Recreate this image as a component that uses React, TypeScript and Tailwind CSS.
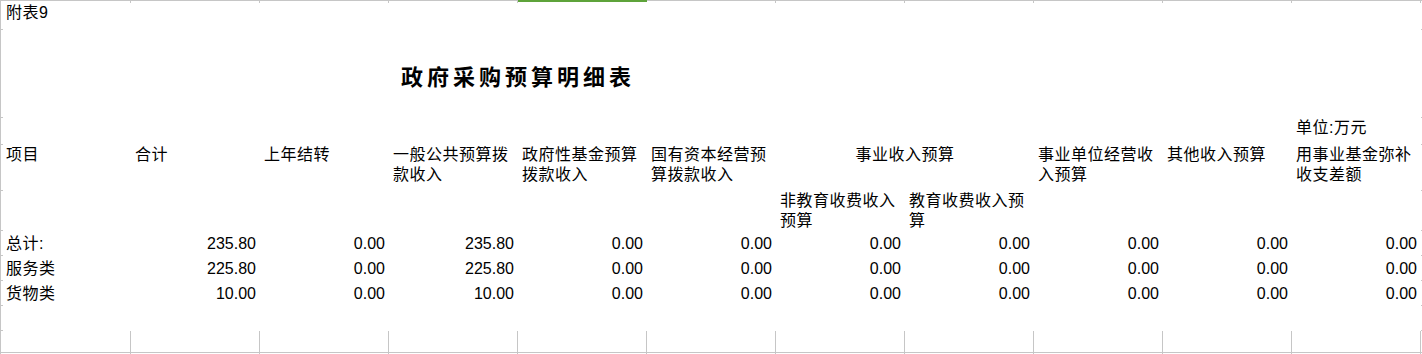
const grid = 'border-[#c6c6c6]';

const dataRows = [
  { name: '总计:', total: '235.80', general: '235.80' },
  { name: '服务类', total: '225.80', general: '225.80' },
  { name: '货物类', total: '10.00', general: '10.00' },
];

// edge cells: left border line with row ticks, right ticks
function LeftEdge({ top }: { top?: boolean }) {
  return <div className={top ? `border-l border-t ${grid}` : `border-l border-b ${grid}`} />;
}
function RightEdge({ top }: { top?: boolean }) {
  return <div className={top ? `border-t ${grid}` : `border-b ${grid}`} />;
}

function Head({ lines, first }: { lines: string[]; first?: boolean }) {
  return (
    <div className={`${first ? 'pl-[3px]' : 'pl-[4px]'} leading-5 tracking-[0.5px] whitespace-nowrap`}>
      {lines.map((l, i) => (
        <div key={i}>{l}</div>
      ))}
    </div>
  );
}

function Num({ v }: { v: string }) {
  return <div className="flex items-center justify-end pr-[4px] leading-5">{v}</div>;
}

export default function App() {
  const cols = Array.from({ length: 11 });
  return (
    <div className="w-[1422px] h-[354px] overflow-hidden bg-white text-black text-[16px] font-[family-name:'Liberation_Sans','Noto_Sans_CJK_SC',sans-serif]">
      <div className="grid grid-cols-[3px_128px_repeat(10,129px)_1px] grid-rows-[3px_27px_88px_27px_46px_40px_25px_25px_25px_25px_22px_2px]">
        {/* top strip */}
        <LeftEdge top />
        {cols.map((_, i) => (
          <div
            key={i}
            className={i === 4 ? 'border-t-2 border-[#5ea33a]' : `border-t border-r ${grid}`}
          />
        ))}
        <RightEdge top />

        {/* 附表9 */}
        <LeftEdge />
        <div className="pl-[3px] leading-5 tracking-[0.5px]">附表9</div>
        {cols.slice(1).map((_, i) => <div key={i} />)}
        <RightEdge />

        {/* title */}
        <LeftEdge />
        <div />
        <div className="col-span-6 flex justify-center pt-[30px]">
          <span className="text-[22px] leading-[30px] font-bold tracking-[4px] font-[family-name:'Noto_Sans_CJK_SC',sans-serif]">
            政府采购预算明细表
          </span>
        </div>
        <div />
        <div />
        <div />
        <div />
        <RightEdge />

        {/* unit */}
        <LeftEdge />
        {cols.slice(1).map((_, i) => <div key={i} />)}
        <Head lines={['单位:万元']} />
        <RightEdge />

        {/* header */}
        <LeftEdge />
        <Head first lines={['项目']} />
        <Head lines={['合计']} />
        <Head lines={['上年结转']} />
        <Head lines={['一般公共预算拨', '款收入']} />
        <Head lines={['政府性基金预算', '拨款收入']} />
        <Head lines={['国有资本经营预', '算拨款收入']} />
        <div className="col-span-2 flex justify-center leading-5 tracking-[0.5px]">事业收入预算</div>
        <Head lines={['事业单位经营收', '入预算']} />
        <Head lines={['其他收入预算']} />
        <Head lines={['用事业基金弥补', '收支差额']} />
        <RightEdge />

        {/* sub header */}
        <LeftEdge />
        {cols.slice(0, 6).map((_, i) => <div key={i} />)}
        <Head lines={['非教育收费收入', '预算']} />
        <Head lines={['教育收费收入预', '算']} />
        <div />
        <div />
        <div />
        <RightEdge />

        {/* data */}
        {dataRows.map(r => [
          <LeftEdge key={r.name + 'l'} />,
          <div key={r.name + 'n'} className="flex items-center pl-[3px] leading-5 tracking-[0.5px]">{r.name}</div>,
          <Num key={r.name + 't'} v={r.total} />,
          <Num key={r.name + 'c'} v="0.00" />,
          <Num key={r.name + 'g'} v={r.general} />,
          ...Array.from({ length: 7 }).map((_, i) => <Num key={r.name + i} v="0.00" />),
          <RightEdge key={r.name + 'r'} />,
        ])}

        {/* empty row */}
        <LeftEdge />
        {cols.map((_, i) => <div key={i} />)}
        <RightEdge />

        {/* plain grid rows below the table */}
        <LeftEdge />
        {cols.map((_, i) => <div key={i} className={`border-r border-b ${grid}`} />)}
        <RightEdge />

        <div className={`border-l ${grid}`} />
        {cols.map((_, i) => <div key={i} className={`border-r ${grid}`} />)}
        <div />
      </div>
    </div>
  );
}
